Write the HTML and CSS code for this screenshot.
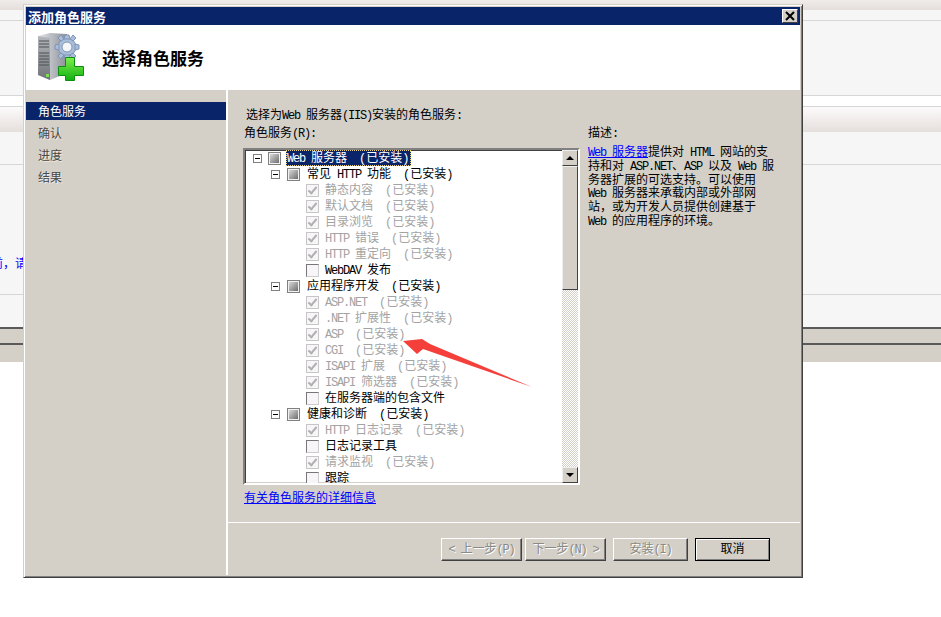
FILE: index.html
```html
<!DOCTYPE html>
<html lang="zh-CN">
<head>
  <meta charset="UTF-8">
  <title>添加角色服务</title>
  <link rel="stylesheet" href="styles.css">
</head>
<body>

<!-- page behind the dialog -->
<div class="bg-top"></div>
<div class="bg-light bg-a"></div>
<div class="bg-light bg-b"></div>
<div class="bg-white"></div>
<div class="bg-band"></div>
<div class="bg-light bg-c"></div>
<div class="bg-light bg-d"><span class="notice">有前，请</span></div>
<div class="bg-light bg-e"></div>
<div class="bg-bar bg-bar1"></div>
<div class="bg-bar bg-bar2"></div>

<div class="dialog">
  <div class="titlebar">
    <span>添加角色服务</span>
    <button class="close" aria-label="关闭">
      <svg width="10" height="10" viewBox="0 0 10 10"><path d="M1 1 L9 9 M9 1 L1 9" stroke="#000" stroke-width="2"/></svg>
    </button>
  </div>

  <div class="head">
    <svg class="head-icon" width="50" height="52" viewBox="0 0 50 52">
      <defs>
        <linearGradient id="side" x1="0" y1="0" x2="1" y2="0">
          <stop offset="0" stop-color="#e4e6ea"/>
          <stop offset="1" stop-color="#8b8f96"/>
        </linearGradient>
        <linearGradient id="front" x1="0" y1="0" x2="0" y2="1">
          <stop offset="0" stop-color="#b4b8bc"/>
          <stop offset="1" stop-color="#6f7377"/>
        </linearGradient>
        <linearGradient id="plus" x1="0" y1="0" x2="0" y2="1">
          <stop offset="0" stop-color="#7cf04a"/>
          <stop offset="1" stop-color="#12b012"/>
        </linearGradient>
      </defs>
      <path d="M2 5 L14 2 L31 3 L31 42 L14 49 L2 44 Z" fill="url(#side)"/>
      <path d="M2 5 L14 7 L14 49 L2 44 Z" fill="url(#front)"/>
      <path d="M3 10 H13 M3 13 H13 M3 16 H13 M3 22 H13 M3 25 H13 M3 28 H13 M3 31 H13 M3 34 H13" stroke="#4d5155" stroke-width="1"/>
      <rect x="10" y="43" width="3" height="3" fill="#7be04a"/>
      <g fill="#a9bedb" stroke="#7f93b3">
        <circle cx="31" cy="16" r="9"/>
        <path d="M29 4 H33 L34 8 H28 Z M29 28 H33 L34 24 H28 Z M19 14 V18 L23 19 V13 Z M43 14 V18 L39 19 V13 Z M22 7 L25 4 L28 8 L25 10 Z M40 7 L37 4 L34 8 L37 10 Z M22 25 L25 28 L28 24 L25 22 Z M40 25 L37 28 L34 24 L37 22 Z"/>
      </g>
      <circle cx="31" cy="16" r="5" fill="#f4f6f8" stroke="#7f93b3"/>
      <path d="M29.5 26.5 H38.5 V35.5 H47.5 V44.5 H38.5 V49.5 H29.5 V44.5 H22.5 V35.5 H29.5 Z" fill="url(#plus)" stroke="#0f8f12"/>
    </svg>
    <h1>选择角色服务</h1>
  </div>

  <div class="body">
    <ul class="nav">
      <li class="active">角色服务</li>
      <li>确认</li>
      <li>进度</li>
      <li>结果</li>
    </ul>

    <div class="main">
      <div class="content">
        <div class="left">
          <div class="intro">选择为<span class="en">Web </span>服务器<span class="en">(IIS)</span>安装的角色服务<span class="en">:</span></div>
          <div class="label">角色服务<span class="en">(R):</span></div>

          <div class="tree">
            <div class="tree-list">
              <div class="row lv0"><i class="exp"></i><i class="tri"></i><span class="sel"><span class="en">Web </span>服务器<span class="st">(已安装)</span></span></div>
              <div class="row lv1"><i class="exp"></i><i class="tri"></i><span>常见<span class="en"> HTTP </span>功能<span class="st">(已安装)</span></span></div>
              <div class="row lv2 off"><i class="cb on"></i><span>静态内容<span class="st">(已安装)</span></span></div>
              <div class="row lv2 off"><i class="cb on"></i><span>默认文档<span class="st">(已安装)</span></span></div>
              <div class="row lv2 off"><i class="cb on"></i><span>目录浏览<span class="st">(已安装)</span></span></div>
              <div class="row lv2 off"><i class="cb on"></i><span><span class="en">HTTP </span>错误<span class="st">(已安装)</span></span></div>
              <div class="row lv2 off"><i class="cb on"></i><span><span class="en">HTTP </span>重定向<span class="st">(已安装)</span></span></div>
              <div class="row lv2"><i class="cb"></i><span><span class="en">WebDAV </span>发布</span></div>
              <div class="row lv1"><i class="exp"></i><i class="tri"></i><span>应用程序开发<span class="st">(已安装)</span></span></div>
              <div class="row lv2 off"><i class="cb on"></i><span><span class="en">ASP.NET</span><span class="st">(已安装)</span></span></div>
              <div class="row lv2 off"><i class="cb on"></i><span><span class="en">.NET </span>扩展性<span class="st">(已安装)</span></span></div>
              <div class="row lv2 off"><i class="cb on"></i><span><span class="en">ASP</span><span class="st">(已安装)</span></span></div>
              <div class="row lv2 off"><i class="cb on"></i><span><span class="en">CGI</span><span class="st">(已安装)</span></span></div>
              <div class="row lv2 off"><i class="cb on"></i><span><span class="en">ISAPI </span>扩展<span class="st">(已安装)</span></span></div>
              <div class="row lv2 off"><i class="cb on"></i><span><span class="en">ISAPI </span>筛选器<span class="st">(已安装)</span></span></div>
              <div class="row lv2"><i class="cb"></i><span>在服务器端的包含文件</span></div>
              <div class="row lv1"><i class="exp"></i><i class="tri"></i><span>健康和诊断<span class="st">(已安装)</span></span></div>
              <div class="row lv2 off"><i class="cb on"></i><span><span class="en">HTTP </span>日志记录<span class="st">(已安装)</span></span></div>
              <div class="row lv2"><i class="cb"></i><span>日志记录工具</span></div>
              <div class="row lv2 off"><i class="cb on"></i><span>请求监视<span class="st">(已安装)</span></span></div>
              <div class="row lv2"><i class="cb"></i><span>跟踪</span></div>
            </div>
            <div class="scroll">
              <div class="sb-btn"><i class="up"></i></div>
              <div class="sb-thumb"></div>
              <div class="sb-track"></div>
              <div class="sb-btn"><i class="down"></i></div>
            </div>
          </div>

          <a class="more" href="#">有关角色服务的详细信息</a>
        </div>

        <div class="desc">
          <div class="desc-title">描述<span class="en">:</span></div>
          <p><a href="#"><span class="en">Web </span>服务器</a>提供对<span class="en"> HTML </span>网站的支<br>持和对<span class="en"> ASP.NET</span>、<span class="en">ASP </span>以及<span class="en"> Web </span>服<br>务器扩展的可选支持。可以使用<br><span class="en">Web </span>服务器来承载内部或外部网<br>站，或为开发人员提供创建基于<br><span class="en">Web </span>的应用程序的环境。</p>
        </div>
      </div>

      <div class="foot">
        <button class="btn w81" disabled><span class="en">&lt; </span>上一步<span class="en">(P)</span></button>
        <button class="btn w81" disabled>下一步<span class="en">(N) &gt;</span></button>
        <button class="btn gap" disabled>安装<span class="en">(I)</span></button>
        <button class="btn gap primary">取消</button>
      </div>
    </div>
  </div>
</div>

<!-- red arrow drawn over the screenshot -->
<svg class="arrow" width="941" height="617" viewBox="0 0 941 617">
  <polygon points="403,341 422,339 430,344 532,387 423,349 417,354" fill="#f43f3a"/>
</svg>

</body>
</html>
```

FILE: styles.css
```css
body {
  margin: 0;
  height: 617px;
  overflow: hidden;
  background: #fff;
  font-family: "Liberation Mono", "Noto Sans CJK SC", monospace;
  font-size: 12px;
  color: #000;
}

/* page behind */
.bg-top {
  height: 10px;
  background: linear-gradient(#f0ecea, #e4dedb);
}
.bg-light {
  background: #f6f6f6;
  border-bottom: 1px solid #d6d6d6;
}
.bg-a { height: 10px; }
.bg-b { height: 74px; }
.bg-white {
  height: 10px;
  background: #fff;
  border-bottom: 1px solid #d6d6d6;
}
.bg-band {
  height: 25px;
  background: linear-gradient(#fdfafb, #e5dfdc);
}
.bg-c { height: 32px; }
.bg-d { height: 129px; }
.bg-e { height: 32px; border-bottom: none; }
.notice {
  display: block;
  width: 44px;
  margin-left: -21px;
  padding-top: 90px;
  line-height: 20px;
  white-space: nowrap;
  color: #0000ff;
}
.bg-bar {
  background: #d4d0c8;
  border-top: 2px solid #5a5a5a;
}
.bg-bar1 { height: 14px; }
.bg-bar2 { height: 17px; }

/* dialog */
.dialog {
  position: absolute;
  left: 23px;
  top: 4px;
  width: 774px;
  height: 568px;
  padding: 2px;
  display: flex;
  flex-direction: column;
  background: #d4d0c8;
  border: 1px solid;
  border-color: #d4d0c8 #404040 #404040 #d4d0c8;
  box-shadow: inset 1px 1px #fff, inset -1px -1px #808080;
}
.titlebar {
  height: 18px;
  flex: none;
  padding: 0 2px;
  display: flex;
  justify-content: space-between;
  align-items: center;
  background: #0a246a;
  color: #fff;
  font-weight: bold;
  font-size: 13px;
}
.close {
  width: 16px;
  height: 14px;
  padding: 0;
  display: flex;
  align-items: center;
  justify-content: center;
  background: #d4d0c8;
  border: 1px solid;
  border-color: #fff #404040 #404040 #fff;
}
.head {
  height: 65px;
  flex: none;
  display: flex;
  align-items: center;
  background: #fff;
}
.head-icon {
  margin-left: 10px;
  margin-top: -1px;
  flex: none;
}
.head h1 {
  margin: 0 0 0 16px;
  font-size: 17px;
  font-weight: bold;
}
.body {
  flex: 1;
  display: flex;
  min-height: 0;
}

/* left steps */
.nav {
  width: 200px;
  flex: none;
  margin: 0;
  padding: 12px 0 0;
  list-style: none;
  border-right: 2px solid #fff;
  color: #4a4a44;
}
.nav li {
  height: 18px;
  line-height: 22px;
  margin-bottom: 4px;
  padding-left: 12px;
  text-shadow: 1px 1px #eeebe6;
}
.nav li.active {
  background: #0a246a;
  color: #fff;
  text-shadow: none;
}

/* right side */
.main {
  flex: 1;
  min-width: 0;
  display: flex;
  flex-direction: column;
}
.content {
  flex: 1;
  display: flex;
  padding: 19px 0 0 15px;
  gap: 8px;
}
.left { width: 337px; flex: none; }
.intro {
  line-height: 14px;
  padding-left: 3px;
}
.label {
  margin: 4px 0 7px;
  line-height: 14px;
  padding-left: 1px;
}
.en {
  letter-spacing: -1.2px;
  white-space: pre;
}

/* tree */
.tree {
  height: 333px;
  display: flex;
  background: #fff;
  border: 2px solid;
  border-color: #808080 #fff #fff #808080;
  box-shadow: inset 1px 1px #404040, inset -1px -1px #d4d0c8;
}
.tree-list {
  flex: 1;
  min-width: 0;
  overflow: hidden;
}
.row {
  height: 16px;
  display: flex;
  align-items: center;
  white-space: nowrap;
}
.row > span {
  height: 16px;
  line-height: 18px;
}
.row i { display: block; flex: none; }
.lv0 { padding-left: 8px; }
.lv1 { padding-left: 26px; }
.lv2 { padding-left: 61px; }
.off { color: #a3a3a3; }
.st { margin-left: 12px; }
.exp {
  position: relative;
  width: 7px;
  height: 7px;
  margin-right: 7px;
  border: 1px solid #808080;
  background: #fff;
}
.lv0 .exp { margin-right: 6px; }
.exp::after {
  content: "";
  position: absolute;
  left: 1px;
  top: 3px;
  width: 5px;
  height: 1px;
  background: #000;
}
.tri {
  width: 9px;
  height: 9px;
  margin-right: 7px;
  border: 1px solid #808080;
  padding: 1px;
  background: linear-gradient(135deg, #d8d8d8, #6e6e6e) content-box, #f2f2f2;
  box-sizing: content-box;
}
.lv0 .tri { margin-right: 5px; }
.cb {
  position: relative;
  width: 11px;
  height: 11px;
  margin-right: 6px;
  border: 1px solid #808080;
  border-color: #777 #ccc #ccc #777;
  background: #f8f5f8;
}
.off .cb { border-color: #c6c6c6; }
.cb.on::after {
  content: "";
  position: absolute;
  left: 3px;
  top: 0;
  width: 3px;
  height: 7px;
  border: solid #b0b0b0;
  border-width: 0 2px 2px 0;
  transform: rotate(40deg);
}
.sel {
  padding: 0 2px 0 1px;
  background: #0a246a;
  color: #fff;
  outline: 1px dotted #e8d080;
  outline-offset: -1px;
}

/* scrollbar */
.scroll {
  width: 16px;
  flex: none;
  display: flex;
  flex-direction: column;
}
.sb-btn, .sb-thumb {
  background: #d4d0c8;
  border: 1px solid;
  border-color: #eee #404040 #404040 #eee;
  box-sizing: border-box;
}
.sb-btn {
  height: 16px;
  flex: none;
  display: flex;
  align-items: center;
  justify-content: center;
}
.sb-thumb { height: 124px; flex: none; }
.sb-track {
  flex: 1;
  background: conic-gradient(#d4d0c8 25%, #fff 0 50%, #d4d0c8 0 75%, #fff 0) 0 0 / 2px 2px;
}
.up, .down {
  width: 0;
  height: 0;
  border: 4px solid transparent;
}
.up { border-bottom-color: #000; margin-top: -4px; }
.down { border-top-color: #000; margin-top: 4px; }

.more {
  display: block;
  margin-top: 7px;
  line-height: 14px;
  padding-left: 1px;
  color: #0000ff;
}
.desc { width: 200px; white-space: nowrap; }
.desc-title { line-height: 14px; padding-top: 18px; }
.desc p {
  margin: 6px 0 0;
  line-height: 13.8px;
}
.desc a { color: #0000ff; }

/* buttons */
.foot {
  flex: none;
  display: flex;
  justify-content: flex-end;
  gap: 3px;
  padding: 15px 30px 14px 0;
  border-top: 1px solid #fff;
}
.btn {
  width: 75px;
  height: 23px;
  padding: 0 0 3px;
  font: inherit;
  background: #d4d0c8;
  border: 1px solid;
  border-color: #fff #404040 #404040 #fff;
  box-shadow: inset -1px -1px #808080;
  color: #000;
}
.btn:disabled {
  color: #8a8a84;
  text-shadow: 1px 1px #fff;
}
.w81 { width: 81px; }
.gap { margin-left: 4px; }
.primary {
  border-color: #000;
  box-shadow: inset 1px 1px #fff, inset -1px -1px #808080;
}

.arrow {
  position: absolute;
  left: 0;
  top: 0;
  pointer-events: none;
}
```
